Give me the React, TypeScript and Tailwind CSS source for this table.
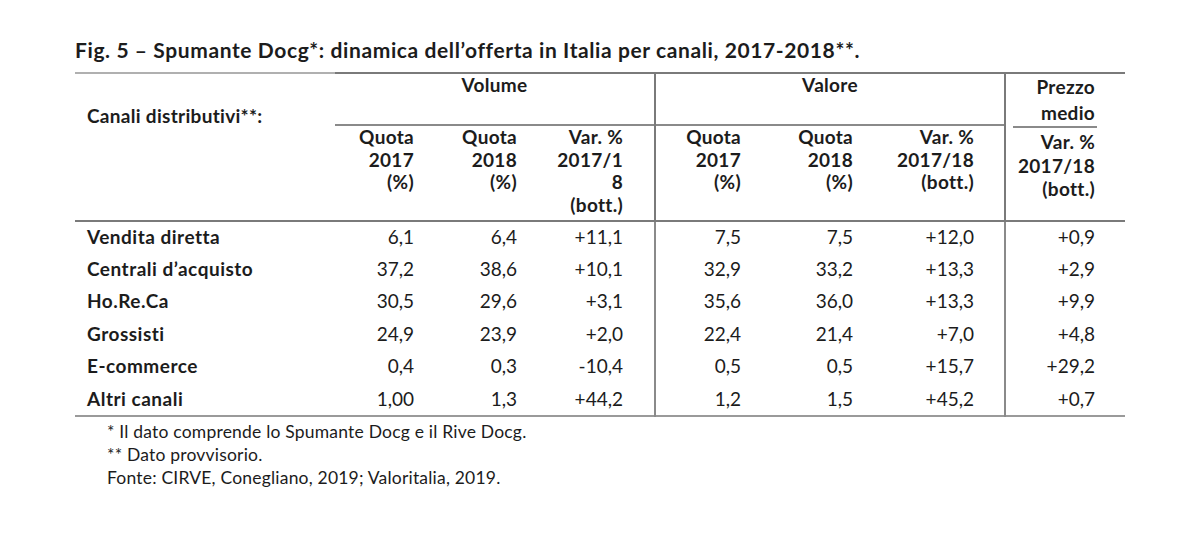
import React from 'react';

type Row = { label: string; values: string[] };

const rows: Row[] = [
  { label: 'Vendita diretta', values: ['6,1', '6,4', '+11,1', '7,5', '7,5', '+12,0', '+0,9'] },
  { label: 'Centrali d’acquisto', values: ['37,2', '38,6', '+10,1', '32,9', '33,2', '+13,3', '+2,9'] },
  { label: 'Ho.Re.Ca', values: ['30,5', '29,6', '+3,1', '35,6', '36,0', '+13,3', '+9,9'] },
  { label: 'Grossisti', values: ['24,9', '23,9', '+2,0', '22,4', '21,4', '+7,0', '+4,8'] },
  { label: 'E-commerce', values: ['0,4', '0,3', '-10,4', '0,5', '0,5', '+15,7', '+29,2'] },
  { label: 'Altri canali', values: ['1,00', '1,3', '+44,2', '1,2', '1,5', '+45,2', '+0,7'] },
];

// padding destra per colonna (allineamento numeri come nell'originale)
const cellPad = ['pr-[6px]', 'pr-[8px]', 'pr-[31px]', 'pr-[9px]', 'pr-[5px]', 'pr-[30px]', 'pr-[30px]'];
const cellBorder = ['', '', '', 'border-l-2 border-[#8a8a8a]', '', '', 'border-l-2 border-[#8a8a8a]'];

export default function App() {
  return (
    <div className="min-h-[535px] w-[1200px] bg-white pl-[75px] pt-[38px] text-[#1c1c1c] font-['Lato',sans-serif] [font-variant-ligatures:none]">
      {/* Titolo */}
      <h1 className="text-[21px] font-bold leading-[24px] tracking-[0.6px]">
        Fig. 5 – Spumante Docg*: dinamica dell’offerta in Italia per canali, 2017-2018**.
      </h1>

      <table className="mt-[10px] w-[1050px] table-fixed border-collapse text-[19px]">
        <colgroup>
          <col className="w-[260px]" />
          <col className="w-[85px]" />
          <col className="w-[105px]" />
          <col className="w-[130px]" />
          <col className="w-[95px]" />
          <col className="w-[108px]" />
          <col className="w-[147px]" />
          <col className="w-[120px]" />
        </colgroup>
        <thead className="font-bold leading-[22.5px] tracking-[0.3px]">
          <tr className="h-[52px]">
            <th
              rowSpan={2}
              className="border-t-2 border-b-2 border-t-[#b0b0b0] border-b-[#7a7a7a] pl-[12px] pt-[31px] text-left align-top font-bold"
            >
              Canali distributivi**:
            </th>
            <th colSpan={3} className="border-t-2 border-[#7a7a7a] pt-0 text-center align-top font-bold">
              Volume
            </th>
            <th colSpan={3} className="border-t-2 border-l-2 border-[#7a7a7a] pt-0 text-center align-top font-bold">
              Valore
            </th>
            <th
              rowSpan={2}
              className="border-t-2 border-l-2 border-b-2 border-[#7a7a7a] p-0 text-right align-top font-bold"
            >
              <div className="ml-[7px] mr-[28px] border-b-2 border-[#8a8a8a] pr-[2px] leading-[26px]">
                <div>Prezzo</div>
                <div>medio</div>
              </div>
              <div className="pr-[30px] pt-[2px] leading-[23.5px]">
                <div>Var. %</div>
                <div>2017/18</div>
                <div>(bott.)</div>
              </div>
            </th>
          </tr>
          <tr className="h-[96px]">
            <th className="border-t-2 border-b-2 border-t-[#8a8a8a] border-b-[#7a7a7a] pr-[6px] text-right align-top font-bold">
              Quota
              <br />
              2017
              <br />
              (%)
            </th>
            <th className="border-t-2 border-b-2 border-t-[#8a8a8a] border-b-[#7a7a7a] pr-[8px] text-right align-top font-bold">
              Quota
              <br />
              2018
              <br />
              (%)
            </th>
            <th className="border-t-2 border-b-2 border-t-[#8a8a8a] border-b-[#7a7a7a] pr-[31px] text-right align-top font-bold">
              Var. %
              <br />
              2017/1
              <br />
              8
              <br />
              (bott.)
            </th>
            <th className="border-t-2 border-b-2 border-l-2 border-t-[#8a8a8a] border-b-[#7a7a7a] border-l-[#7a7a7a] pr-[9px] text-right align-top font-bold">
              Quota
              <br />
              2017
              <br />
              (%)
            </th>
            <th className="border-t-2 border-b-2 border-t-[#8a8a8a] border-b-[#7a7a7a] pr-[5px] text-right align-top font-bold">
              Quota
              <br />
              2018
              <br />
              (%)
            </th>
            <th className="border-t-2 border-b-2 border-t-[#8a8a8a] border-b-[#7a7a7a] pr-[30px] text-right align-top font-bold">
              Var. %
              <br />
              2017/18
              <br />
              (bott.)
            </th>
          </tr>
        </thead>
        <tbody className="leading-[23px]">
          {rows.map((row, i) => (
            <tr
              key={row.label}
              className={`h-[32.5px] ${i === rows.length - 1 ? 'border-b-2 border-[#9a9a9a]' : ''}`}
            >
              <td className="pl-[12px] pt-[3px] text-left align-top font-bold tracking-[0.5px]">{row.label}</td>
              {row.values.map((v, j) => (
                <td key={j} className={`pt-[3px] text-right align-top ${cellPad[j]} ${cellBorder[j]}`}>
                  {v}
                </td>
              ))}
            </tr>
          ))}
        </tbody>
      </table>

      {/* Note */}
      <div className="mt-[3px] pl-[32px] text-[17.5px] leading-[23px] tracking-[0.2px]">
        <p>* Il dato comprende lo Spumante Docg e il Rive Docg.</p>
        <p>** Dato provvisorio.</p>
        <p>Fonte: CIRVE, Conegliano, 2019; Valoritalia, 2019.</p>
      </div>
    </div>
  );
}
